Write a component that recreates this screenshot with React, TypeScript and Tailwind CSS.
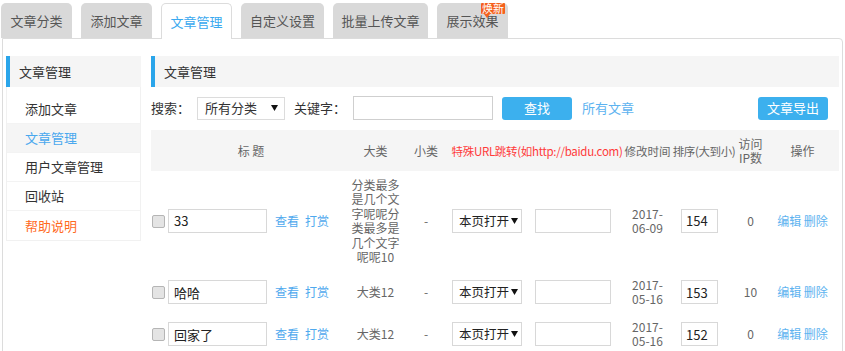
import React from "react";

const Caret = () => (
  <svg width="7" height="6" viewBox="0 0 7 6" className="shrink-0">
    <path d="M0 0 H7 L3.5 6 Z" fill="#111" />
  </svg>
);

const Checkbox = () => (
  <span className="block w-[13px] h-[13px] rounded-[2px] border border-[#b5b5b5] bg-[#e4e4e4] shrink-0" />
);

type Row = {
  title: string;
  cat: React.ReactNode;
  date: [string, string];
  sort: string;
  ip: string;
};

const rows: Row[] = [
  {
    title: "33",
    cat: "分类最多是几个文字呢呢分类最多是几个文字呢呢10",
    date: ["2017-", "06-09"],
    sort: "154",
    ip: "0",
  },
  { title: "哈哈", cat: "大类12", date: ["2017-", "05-16"], sort: "153", ip: "10" },
  { title: "回家了", cat: "大类12", date: ["2017-", "05-16"], sort: "152", ip: "0" },
];

export default function App() {
  const tabs = [
    { label: "文章分类", w: "w-[71px]" },
    { label: "添加文章", w: "w-[71px]" },
    { label: "文章管理", w: "w-[71px]", active: true },
    { label: "自定义设置", w: "w-[83px]" },
    { label: "批量上传文章", w: "w-[95px]" },
    { label: "展示效果", w: "w-[71px]", badge: true },
  ];
  const side = [
    { label: "添加文章" },
    { label: "文章管理", active: true },
    { label: "用户文章管理" },
    { label: "回收站" },
    { label: "帮助说明", help: true },
  ];
  return (
    <div className="w-[845px] h-[351px] overflow-hidden bg-white font-['Noto_Sans_CJK_SC',sans-serif] text-[#333]">
      {/* tabs */}
      <div className="flex items-end h-[38px] pl-[1px] gap-[9px]">
        {tabs.map((t) =>
          t.active ? (
            <div
              key={t.label}
              className={`${t.w} h-[36px] -mb-px relative z-10 bg-white border border-b-0 border-[#dcdcdc] rounded-t-[5px] flex items-center justify-center text-[13px] text-[#3aa9ef]`}
            >
              {t.label}
            </div>
          ) : (
            <div
              key={t.label}
              className={`${t.w} h-[35px] relative bg-[#d9d9d9] rounded-t-[5px] flex items-center justify-center text-[13px] text-[#555]`}
            >
              {t.label}
              {t.badge && (
                <span className="absolute top-0 left-[44px] h-[11px] px-[1px] bg-[#f5601e] text-white text-[11px] leading-[11px] rounded-[1px] whitespace-nowrap">
                  焕新
                  <span className="absolute left-[3px] top-[11px] w-0 h-0 border-l-[3px] border-r-[3px] border-t-[4px] border-l-transparent border-r-transparent border-t-[#f5601e]" />
                </span>
              )}
            </div>
          )
        )}
      </div>

      {/* panel */}
      <div className="ml-[2px] w-[841px] h-[320px] border border-[#dcdcdc] rounded-tr-[4px] pt-[17px] pl-[3px] flex gap-[10px]">
        {/* sidebar */}
        <div className="w-[135px] shrink-0">
          <div className="h-[31px] bg-[#f5f5f5] border-l-4 border-[#2aa5ea] pl-[9px] flex items-center text-[13px] text-[#333]">
            文章管理
          </div>
          <div className="border-x border-b border-[#f1f1f1] pt-[8px]">
            {side.map((s, i) => (
              <div
                key={s.label}
                className={`h-[29px] pl-[18px] flex items-center text-[13px] ${
                  i < side.length - 1 ? "border-b border-[#f3f3f3]" : ""
                } ${s.active ? "bg-[#f5f5f5] text-[#4aa8ee]" : s.help ? "text-[#ff6a1f]" : "text-[#333]"}`}
              >
                {s.label}
              </div>
            ))}
          </div>
        </div>

        {/* main */}
        <div className="w-[688px] shrink-0">
          <div className="h-[31px] bg-[#f5f5f5] border-l-4 border-[#2aa5ea] pl-[9px] flex items-center text-[13px] text-[#333]">
            文章管理
          </div>

          {/* search */}
          <div className="mt-[9px] h-[24px] flex items-center text-[13px]">
            <span className="text-[#333] whitespace-nowrap">搜索：</span>
            <div className="ml-[7px] w-[88px] h-[23px] border border-[#dcdcdc] flex items-center justify-between pl-[7px] pr-[6px]">
              <span className="whitespace-nowrap">所有分类</span>
              <Caret />
            </div>
            <span className="ml-[9px] text-[#333] whitespace-nowrap">关键字：</span>
            <div className="ml-[7px] w-[140px] h-[24px] border border-[#cfcfcf] bg-white" />
            <div className="ml-[9px] w-[70px] h-[23px] rounded-[3px] bg-[#3cb0ee] text-white flex items-center justify-center">
              查找
            </div>
            <span className="ml-[10px] text-[#5db3f0] whitespace-nowrap">所有文章</span>
            <div className="ml-auto mr-[11px] w-[70px] h-[23px] rounded-[3px] bg-[#3cb0ee] text-white flex items-center justify-center">
              文章导出
            </div>
          </div>

          {/* table header */}
          <div className="mt-[10px] h-[41px] bg-[#f5f5f5] flex items-center text-[12px] text-[#666] leading-[14px]">
            <div className="w-[200px] text-center">标 题</div>
            <div className="w-[49px] text-center">大类</div>
            <div className="w-[52px] text-center">小类</div>
            <div className="w-[170px] flex justify-center">
              <span className="whitespace-nowrap text-[#ff3a3a] text-[11.5px] tracking-[-0.3px]">
                特殊URL跳转(如http://baidu.com)
              </span>
            </div>
            <div className="w-[51px] flex justify-center">
              <span className="whitespace-nowrap text-[11.5px]">修改时间</span>
            </div>
            <div className="w-[62px] flex justify-center">
              <span className="whitespace-nowrap text-[11.5px] tracking-[-0.4px]">排序(大到小)</span>
            </div>
            <div className="w-[31px] text-center">
              访问
              <br />
              IP数
            </div>
            <div className="w-[73px] text-center">操作</div>
          </div>

          {/* rows */}
          {rows.map((r) => (
            <div key={r.sort} className="flex items-center py-[7px] text-[12px] text-[#666]">
              <div className="w-[200px] flex items-center">
                <span className="ml-[1px]">
                  <Checkbox />
                </span>
                <div className="ml-[3px] w-[99px] h-[24px] border border-[#d8d8d8] pl-[5px] flex items-center text-[13px] text-[#222] whitespace-nowrap">
                  {r.title}
                </div>
                <span className="ml-[8px] text-[#4fa9ee] whitespace-nowrap">查看</span>
                <span className="ml-[6px] text-[#4fa9ee] whitespace-nowrap">打赏</span>
              </div>
              <div className="w-[49px] text-center leading-[14.4px]">{r.cat}</div>
              <div className="w-[52px] text-center">-</div>
              <div className="w-[170px] flex items-center">
                <div className="w-[70px] h-[24px] border border-[#d8d8d8] flex items-center justify-between pl-[6px] pr-[3px] text-[12.5px] text-[#222] overflow-hidden">
                  <span className="whitespace-nowrap">本页打开</span>
                  <Caret />
                </div>
                <div className="ml-[13px] w-[76px] h-[24px] border border-[#d8d8d8]" />
              </div>
              <div className="w-[51px] text-center leading-[14px]">
                {r.date[0]}
                <br />
                {r.date[1]}
              </div>
              <div className="w-[62px] flex items-center">
                <div className="ml-[8px] w-[37px] h-[24px] border border-[#d8d8d8] pl-[4px] flex items-center text-[13px] text-[#222]">
                  {r.sort}
                </div>
              </div>
              <div className="w-[31px] text-center">{r.ip}</div>
              <div className="w-[73px] text-center text-[#5db3f0] whitespace-nowrap">编辑 删除</div>
            </div>
          ))}
        </div>
      </div>
    </div>
  );
}
